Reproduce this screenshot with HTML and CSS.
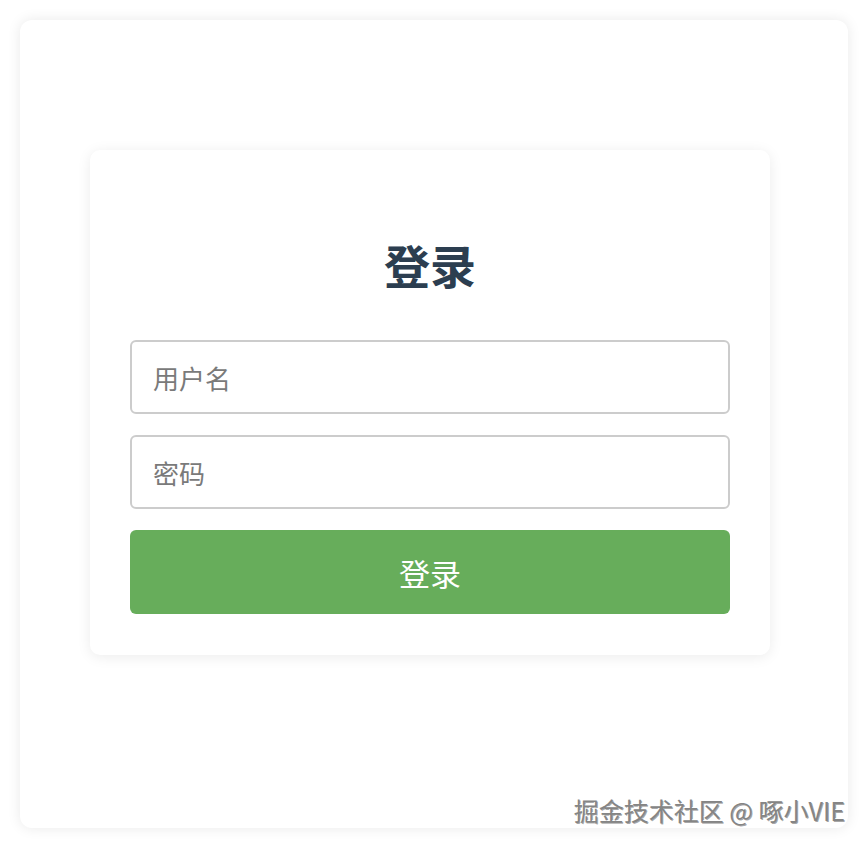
FILE: index.html
```html
<!DOCTYPE html>
<html lang="zh">
<head>
<meta charset="utf-8">
<title>登录</title>
<link rel="stylesheet" href="styles.css">
</head>
<body>
<div class="frame">
  <div class="login-card">
    <h2 class="title">登录</h2>
    <input class="field" type="text" placeholder="用户名">
    <input class="field" type="password" placeholder="密码">
    <button class="submit" type="button">登录</button>
  </div>
</div>
<div class="watermark">掘金技术社区 @ 啄小VIE</div>
</body>
</html>
```
FILE: styles.css
```css
html, body {
  margin: 0;
  padding: 0;
  background: #ffffff;
}
body {
  padding: 20px;
  font-family: "Noto Sans CJK SC", "Noto Sans", sans-serif;
}
.frame {
  width: 828px;
  height: 808px;
  box-sizing: border-box;
  background: #fff;
  border-radius: 12px;
  box-shadow: 0 0 14px rgba(0, 0, 0, 0.09);
  padding: 130px 0 0 70px;
}
.login-card {
  width: 680px;
  box-sizing: border-box;
  padding: 40px 40px 41px;
  background: #fff;
  border-radius: 10px;
  box-shadow: 0 2px 14px rgba(0, 0, 0, 0.08);
  display: flex;
  flex-direction: column;
}
.title {
  margin: 46px 0 48px;
  text-align: center;
  font-size: 46px;
  line-height: 56px;
  font-weight: 700;
  color: #2c3e50;
}
.field {
  height: 74px;
  box-sizing: border-box;
  border: 2px solid #cccccc;
  border-radius: 6px;
  padding: 0 21px;
  margin: 0 0 21px;
  font-family: "Noto Sans CJK SC", "Noto Sans", sans-serif;
  font-size: 26px;
  color: #333;
  outline: none;
}
.field::placeholder {
  color: #7a7a7a;
}
.submit {
  height: 84px;
  border: none;
  border-radius: 6px;
  background: #67ad5b;
  color: #ffffff;
  font-family: "Noto Sans CJK SC", "Noto Sans", sans-serif;
  font-size: 31px;
  cursor: pointer;
}
.watermark {
  position: absolute;
  right: 23px;
  top: 793px;
  font-size: 25px;
  line-height: 34px;
  font-weight: 400;
  color: #858585;
  text-shadow: -1px -1px 0 #ffffff, 1px 1px 0 rgba(0, 0, 0, 0.35);
  white-space: nowrap;
}
```
